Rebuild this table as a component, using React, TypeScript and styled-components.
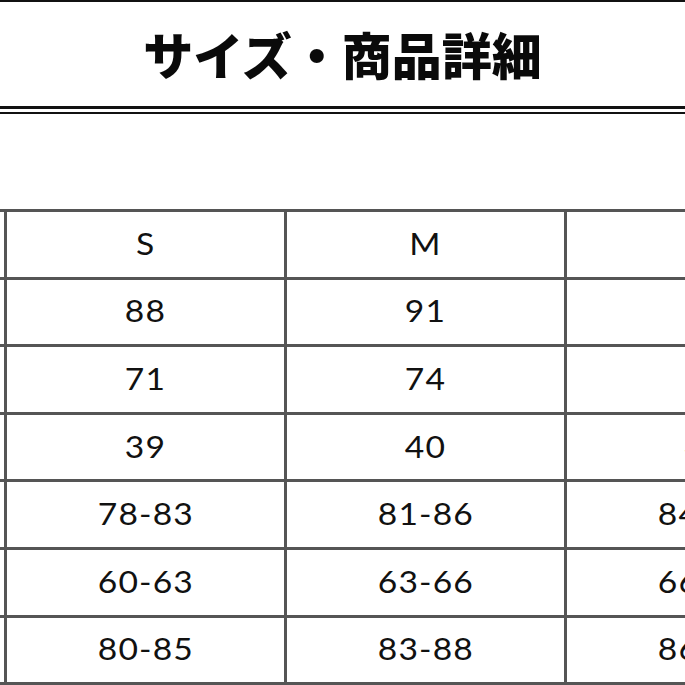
import styled, { createGlobalStyle } from 'styled-components'

const GlobalStyle = createGlobalStyle`
  html, body {
    margin: 0;
    padding: 0;
    background: #fff;
    overflow: hidden;
  }
`

const sizes = ['S', 'M', 'L']

const rows = [
  { label: 'バスト', values: ['88', '91', '94'] },
  { label: 'ウエスト', values: ['71', '74', '77'] },
  { label: '肩幅', values: ['39', '40', '41'] },
  { label: '適応バスト', values: ['78-83', '81-86', '84-89'] },
  { label: '適応ウエスト', values: ['60-63', '63-66', '66-69'] },
  { label: '適応ヒップ', values: ['80-85', '83-88', '86-91'] },
]

const App = () => {
  return (
    <Page>
      <GlobalStyle />
      <Header>
        <Title>サイズ・商品詳細</Title>
      </Header>
      <Divider />
      <TableWrap>
        <SizeTable>
          <Cell>
            <CellText>サイズ</CellText>
          </Cell>
          {sizes.map((s) => (
            <Cell key={s}>
              <CellText>{s}</CellText>
            </Cell>
          ))}
          {rows.map((row) => [
            <Cell key={row.label}>
              <CellText>{row.label}</CellText>
            </Cell>,
            ...row.values.map((v, idx) => (
              <Cell key={row.label + idx}>
                <CellText>{v}</CellText>
              </Cell>
            )),
          ])}
        </SizeTable>
      </TableWrap>
    </Page>
  )
}

export default App

const Page = styled.div`
  width: 685px;
  height: 685px;
  display: flex;
  flex-direction: column;
  background: #fff;
  overflow: hidden;
`

const Header = styled.div`
  height: 104px;
  border-top: 2px solid #111;
  display: flex;
  align-items: center;
  justify-content: center;
`

const Title = styled.h1`
  margin: 0;
  padding-bottom: 2px;
  font-family: 'Noto Sans CJK JP', 'Noto Sans', sans-serif;
  font-weight: 900;
  font-size: 50px;
  line-height: 1;
  color: #0a0a0a;
`

const Divider = styled.div`
  height: 3px;
  border-top: 3px solid #111;
  border-bottom: 2px solid #111;
`

const TableWrap = styled.div`
  margin-top: 95px;
  width: 685px;
  overflow: hidden;
`

const SizeTable = styled.div`
  display: grid;
  grid-template-columns: repeat(4, 277px);
  grid-auto-rows: 64.6px;
  gap: 3px;
  padding: 3px;
  width: max-content;
  margin-left: -276px;
  background: #555;
`

const Cell = styled.div`
  background: #fff;
  display: flex;
  align-items: center;
  justify-content: center;
  padding-bottom: 3px;
`

const CellText = styled.span`
  display: inline-block;
  font-family: Lato, 'Noto Sans CJK JP', sans-serif;
  font-size: 30px;
  font-weight: 400;
  line-height: 1;
  letter-spacing: 1px;
  color: #111;
  transform: scaleX(1.12);
`
